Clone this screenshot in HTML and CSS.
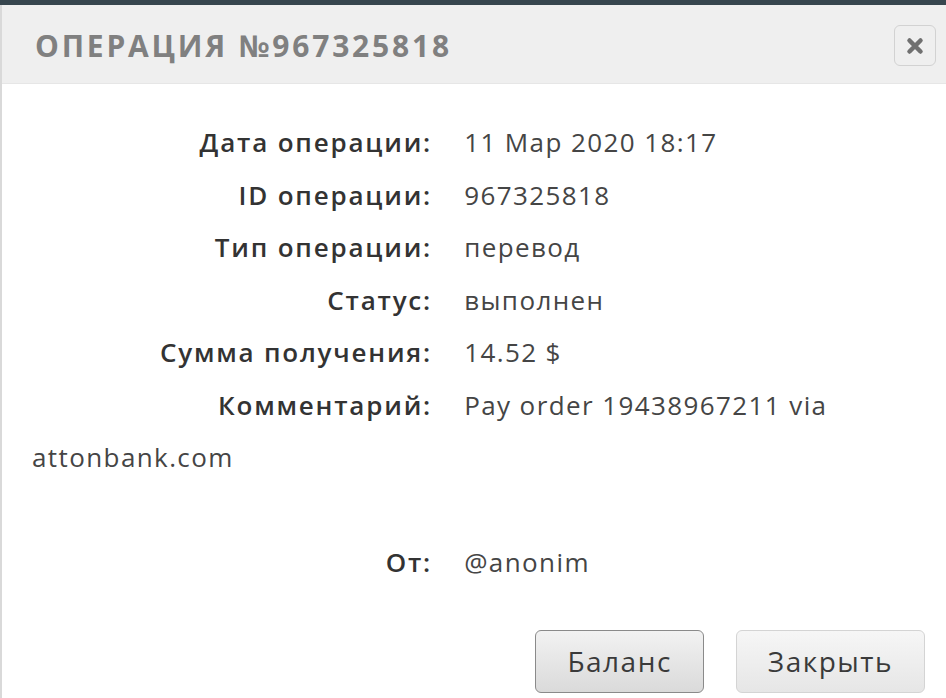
FILE: index.html
```html
<!DOCTYPE html>
<html lang="ru">
<head>
    <meta charset="UTF-8">
    <meta name="viewport" content="width=device-width, initial-scale=1.0">
    <title>Операция №967325818</title>
    <link rel="stylesheet" href="styles.css">
</head>
<body>

    <div class="topbar"></div>

    <div class="dialog">
        <div class="dialog-header">
            <span class="dialog-title">Операция №967325818</span>
            <button class="close-btn" title="Закрыть">
                <svg width="18" height="18" viewBox="0 0 18 18">
                    <path d="M3.5 3.5 L14.5 14.5 M14.5 3.5 L3.5 14.5" stroke="#707070" stroke-width="4.5" stroke-linecap="round"/>
                </svg>
            </button>
        </div>

        <div class="dialog-body">
            <div class="row"><span class="label">Дата операции:</span> 11 Мар 2020 18:17</div>
            <div class="row"><span class="label">ID операции:</span> 967325818</div>
            <div class="row"><span class="label">Тип операции:</span> перевод</div>
            <div class="row"><span class="label">Статус:</span> выполнен</div>
            <div class="row"><span class="label">Сумма получения:</span> 14.52 $</div>
            <div class="row"><span class="label">Комментарий:</span> Pay order 19438967211 via attonbank.com<br><br></div>
            <div class="row"><span class="label">От:</span> @anonim</div>
        </div>

        <div class="dialog-footer">
            <button class="btn btn-primary">Баланс</button>
            <button class="btn">Закрыть</button>
        </div>
    </div>

</body>
</html>
```

FILE: styles.css
```css
body {
    margin: 0;
    padding: 0;
    background-color: #fff;
    font-family: "Open Sans", Arial, sans-serif;
    overflow: hidden;
}

.topbar {
    height: 5px;
    background-color: #37464e;
}

.dialog {
    border-left: 2px solid #d9d9d9;
    min-height: 693px;
    box-sizing: border-box;
}

.dialog-header {
    display: flex;
    align-items: center;
    justify-content: space-between;
    height: 79px;
    padding: 3px 10px 0 33px;
    background-color: #efefef;
    border-bottom: 1px solid #e6e6e6;
    box-sizing: border-box;
}

.dialog-title {
    font-size: 30px;
    font-weight: 700;
    letter-spacing: 2.8px;
    text-transform: uppercase;
    color: #808080;
}

.close-btn {
    width: 42px;
    height: 41px;
    display: flex;
    align-items: center;
    justify-content: center;
    background-color: #efefef;
    border: 1px solid #d2d2d2;
    border-radius: 6px;
    padding: 0;
    cursor: pointer;
}

.dialog-body {
    padding: 32px 20px 0 30px;
}

.row {
    font-size: 26px;
    line-height: 52.5px;
    letter-spacing: 1.4px;
    color: #454545;
}

.label {
    display: inline-block;
    vertical-align: top;
    width: 400px;
    margin-right: 24px;
    text-align: right;
    font-weight: 600;
    letter-spacing: 1.8px;
    color: #333;
}

.dialog-footer {
    display: flex;
    justify-content: flex-end;
    gap: 32px;
    padding: 41px 21px 0 0;
}

.btn {
    height: 63px;
    padding: 0 31px;
    font-family: "Open Sans", Arial, sans-serif;
    font-size: 28px;
    letter-spacing: 1.5px;
    color: #3a3a3a;
    background: linear-gradient(#f6f6f6, #e6e6e6);
    border: 1px solid #d4d4d4;
    border-radius: 6px;
    cursor: pointer;
}

.btn-primary {
    border-color: #8a8a8a;
    background: linear-gradient(#f2f2f2, #dadada);
}
```
